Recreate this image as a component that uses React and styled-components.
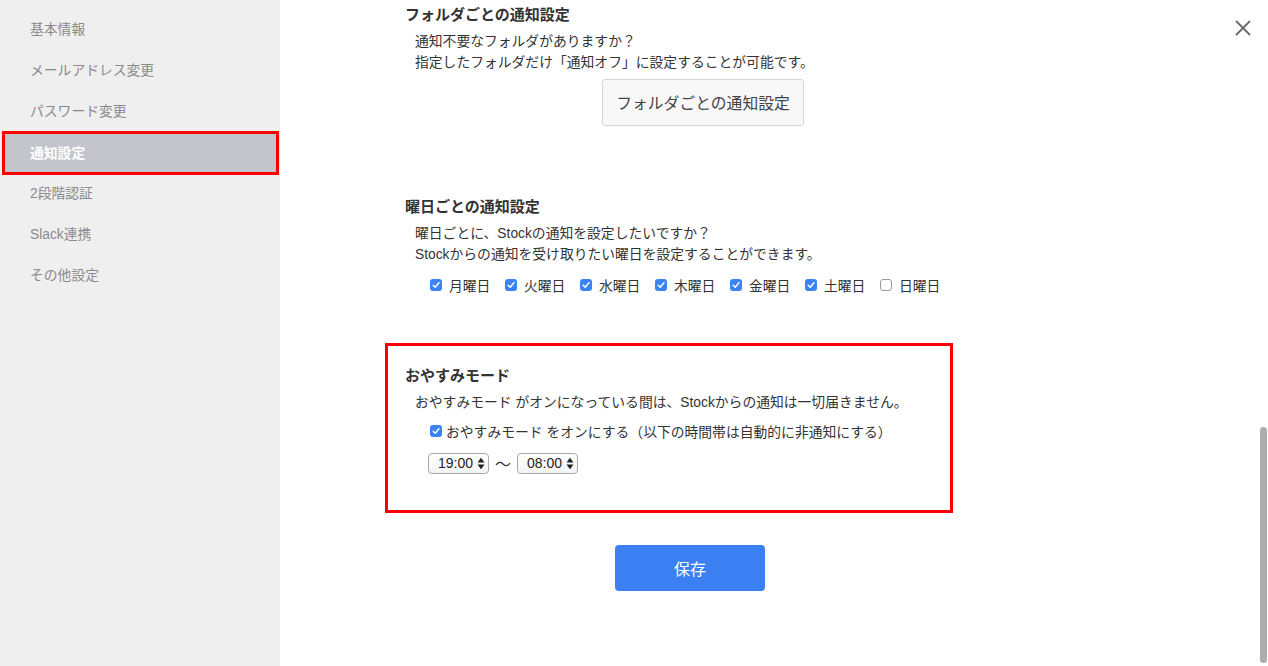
import React from "react";
import styled, { createGlobalStyle } from "styled-components";

const Global = createGlobalStyle`
  html, body { margin: 0; padding: 0; height: 100%; }
  body {
    font-family: "Liberation Sans", "Noto Sans CJK JP", sans-serif;
    color: #333;
    background: #fff;
    overflow: hidden;
  }
`;

const Page = styled.div`
  display: flex;
  width: 1268px;
  height: 666px;
  position: relative;
  overflow: hidden;
`;

const Sidebar = styled.nav`
  width: 280px;
  flex: none;
  background: #efefef;
  display: flex;
  flex-direction: column;
  padding-top: 7px;
  box-sizing: border-box;
`;

const NavItem = styled.div`
  height: ${p => (p.$active ? "44px" : "41px")};
  box-sizing: border-box;
  flex: none;
  display: flex;
  align-items: center;
  padding-left: ${p => (p.$active ? "25px" : "30px")};
  padding-bottom: ${p => (p.$active ? "2px" : "0")};
  margin: ${p => (p.$active ? "1px 1px -4px 2px" : "0")};
  font-size: 13.8px;
  color: ${p => (p.$active ? "#fff" : "#8a8a8a")};
  font-weight: ${p => (p.$active ? "bold" : "normal")};
  background: ${p => (p.$active ? "#c4c5cc" : "transparent")};
  border: ${p => (p.$active ? "3px solid #f00" : "none")};
`;

const Main = styled.main`
  flex: 1;
  padding-left: 105px;
  padding-top: 5px;
  box-sizing: border-box;
`;

const Column = styled.div`
  width: 568px;
  display: flex;
  flex-direction: column;
`;

const Section = styled.section`
  padding: ${p => p.$pad || "0 20px"};
  margin-top: ${p => p.$mt || "0"};
  border: ${p => (p.$highlight ? "3px solid #f00" : "none")};
`;

const Title = styled.h3`
  margin: 0;
  font-size: 15px;
  line-height: 20px;
  font-weight: bold;
  color: #333;
`;

const Text = styled.p`
  margin: 6px 0 0 10px;
  font-size: 13.8px;
  line-height: 21px;
  color: #333;
`;

const GhostButton = styled.button`
  margin: 6px 0 0 197px;
  width: 202px;
  height: 47px;
  background: #f8f8f8;
  border: 1px solid #d6d6d6;
  border-radius: 3px;
  font-family: inherit;
  font-size: 15.8px;
  color: #444;
  padding: 0;
`;

const DayRow = styled.div`
  display: flex;
  margin: 10px 0 0 25px;
  height: 20px;
  align-items: center;
`;

const Day = styled.label`
  display: flex;
  flex: none;
  align-items: center;
  width: 75px;
  font-size: 13.8px;
  color: #333;
  gap: 7px;
`;

const Box = styled.span`
  width: 12px;
  height: 12px;
  flex: none;
  border-radius: 3px;
  box-sizing: border-box;
  background: ${p => (p.$checked ? "#3a82f6" : "#fff")};
  border: ${p => (p.$checked ? "none" : "1px solid #9a9a9a")};
  display: flex;
  align-items: center;
  justify-content: center;
`;

const Check = ({ checked }) => (
  <Box $checked={checked}>
    {checked && (
      <svg width="10" height="10" viewBox="0 0 10 10">
        <path d="M2.2 5.2 L4.2 7.2 L7.9 2.7" fill="none" stroke="#fff" strokeWidth="1.5" strokeLinecap="round" strokeLinejoin="round" />
      </svg>
    )}
  </Box>
);

const OptionRow = styled.label`
  display: flex;
  align-items: center;
  gap: 4px;
  margin: 8px 0 0 25px;
  height: 20px;
  font-size: 13.8px;
  color: #333;
`;

const TimeRow = styled.div`
  display: flex;
  align-items: center;
  margin: 10px 0 0 23px;
  gap: 5px;
  font-size: 14px;
`;

const Select = styled.div`
  width: 61px;
  height: 21px;
  box-sizing: border-box;
  border: 1px solid #a9a9a9;
  border-radius: 4px;
  background: linear-gradient(#fff, #f4f4f4);
  display: flex;
  align-items: center;
  justify-content: space-between;
  padding: 0 3px 0 9px;
  font-size: 14px;
  color: #222;
`;

const Arrows = () => (
  <svg width="8" height="13" viewBox="0 0 8 13">
    <path d="M4 0.8 L7.5 5.6 L0.5 5.6 Z" fill="#222" />
    <path d="M4 12.2 L7.5 7.4 L0.5 7.4 Z" fill="#222" />
  </svg>
);

const Tilde = styled.span`
  font-size: 16px;
  color: #333;
  margin: 0 1px;
`;

const SaveButton = styled.button`
  margin: 32px 0 0 230px;
  width: 150px;
  height: 46px;
  background: #3a80f3;
  border: none;
  border-radius: 4px;
  color: #fff;
  font-family: inherit;
  font-size: 16px;
  padding: 0;
`;

const Close = styled.button`
  position: absolute;
  top: 20px;
  right: 17px;
  width: 16px;
  height: 16px;
  padding: 0;
  border: none;
  background: none;
`;

const Scrollbar = styled.div`
  position: absolute;
  right: 1px;
  top: 427px;
  width: 7px;
  height: 236px;
  border-radius: 4px;
  background: #adadad;
`;

const navItems = ["基本情報", "メールアドレス変更", "パスワード変更", "通知設定", "2段階認証", "Slack連携", "その他設定"];
const days = [
  ["月曜日", true],
  ["火曜日", true],
  ["水曜日", true],
  ["木曜日", true],
  ["金曜日", true],
  ["土曜日", true],
  ["日曜日", false],
];

export default function App() {
  return (
    <>
      <Global />
      <Page>
        <Sidebar>
          {navItems.map(n => (
            <NavItem key={n} $active={n === "通知設定"}>{n}</NavItem>
          ))}
        </Sidebar>
        <Main>
          <Column>
            <Section>
              <Title>フォルダごとの通知設定</Title>
              <Text>
                通知不要なフォルダがありますか？
                <br />
                指定したフォルダだけ「通知オフ」に設定することが可能です。
              </Text>
              <GhostButton>フォルダごとの通知設定</GhostButton>
            </Section>
            <Section $mt="71px">
              <Title>曜日ごとの通知設定</Title>
              <Text>
                曜日ごとに、Stockの通知を設定したいですか？
                <br />
                Stockからの通知を受け取りたい曜日を設定することができます。
              </Text>
              <DayRow>
                {days.map(([d, c]) => (
                  <Day key={d}>
                    <Check checked={c} />
                    {d}
                  </Day>
                ))}
              </DayRow>
            </Section>
            <Section $highlight $mt="48px" $pad="20px 17px 35px">
              <Title>おやすみモード</Title>
              <Text>おやすみモード がオンになっている間は、Stockからの通知は一切届きません。</Text>
              <OptionRow>
                <Check checked />
                おやすみモード をオンにする（以下の時間帯は自動的に非通知にする）
              </OptionRow>
              <TimeRow>
                <Select>19:00<Arrows /></Select>
                <Tilde>〜</Tilde>
                <Select>08:00<Arrows /></Select>
              </TimeRow>
            </Section>
            <SaveButton>保存</SaveButton>
          </Column>
        </Main>
        <Close aria-label="close">
          <svg width="16" height="16" viewBox="0 0 16 16">
            <path d="M1.5 1.5 L14.5 14.5 M14.5 1.5 L1.5 14.5" stroke="#6b6b6b" strokeWidth="1.8" strokeLinecap="round" />
          </svg>
        </Close>
        <Scrollbar />
      </Page>
    </>
  );
}
